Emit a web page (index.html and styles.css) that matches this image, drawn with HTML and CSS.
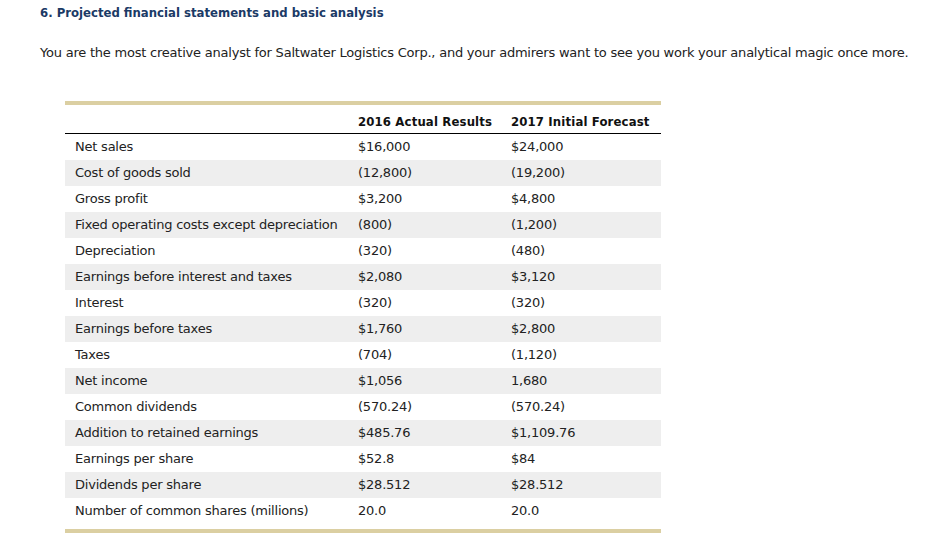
FILE: index.html
```html
<!DOCTYPE html>
<html>
<head>
<meta charset="utf-8">
<link rel="stylesheet" href="styles.css">
</head>
<body>
<div class="page">
  <h1 class="title">6. Projected financial statements and basic analysis</h1>
  <p class="intro">You are the most creative analyst for Saltwater Logistics Corp., and your admirers want to see you work your analytical magic once more.</p>
  <div class="table-wrap">
    <table class="fin">
      <thead>
        <tr>
          <th class="c1"></th>
          <th class="c2">2016 Actual Results</th>
          <th class="c3">2017 Initial Forecast</th>
        </tr>
      </thead>
      <tbody>
        <tr><td>Net sales</td><td>$16,000</td><td>$24,000</td></tr>
        <tr class="alt"><td>Cost of goods sold</td><td>(12,800)</td><td>(19,200)</td></tr>
        <tr><td>Gross profit</td><td>$3,200</td><td>$4,800</td></tr>
        <tr class="alt"><td>Fixed operating costs except depreciation</td><td>(800)</td><td>(1,200)</td></tr>
        <tr><td>Depreciation</td><td>(320)</td><td>(480)</td></tr>
        <tr class="alt"><td>Earnings before interest and taxes</td><td>$2,080</td><td>$3,120</td></tr>
        <tr><td>Interest</td><td>(320)</td><td>(320)</td></tr>
        <tr class="alt"><td>Earnings before taxes</td><td>$1,760</td><td>$2,800</td></tr>
        <tr><td>Taxes</td><td>(704)</td><td>(1,120)</td></tr>
        <tr class="alt"><td>Net income</td><td>$1,056</td><td>1,680</td></tr>
        <tr><td>Common dividends</td><td>(570.24)</td><td>(570.24)</td></tr>
        <tr class="alt"><td>Addition to retained earnings</td><td>$485.76</td><td>$1,109.76</td></tr>
        <tr><td>Earnings per share</td><td>$52.8</td><td>$84</td></tr>
        <tr class="alt"><td>Dividends per share</td><td>$28.512</td><td>$28.512</td></tr>
        <tr><td>Number of common shares (millions)</td><td>20.0</td><td>20.0</td></tr>
      </tbody>
    </table>
  </div>
</div>
</body>
</html>
```

FILE: styles.css
```css
html, body {
  margin: 0;
  padding: 0;
  background: #ffffff;
}
body {
  font-family: Verdana, "DejaVu Sans", sans-serif;
  font-size: 13px;
  letter-spacing: -0.22px;
  color: #222222;
}
.page {
  padding: 5px 40px 0 40px;
}
.title {
  margin: 0;
  font-family: "DejaVu Sans Condensed", "DejaVu Sans", sans-serif;
  font-stretch: condensed;
  letter-spacing: 0;
  font-size: 13px;
  font-weight: bold;
  line-height: 16px;
  color: #1b3a66;
}
.intro {
  margin: 24px 0 0 0;
  line-height: 16px;
  white-space: nowrap;
}
.table-wrap {
  margin: 40px 0 0 25px;
  width: 596px;
  border-top: 4px solid #dbcfa2;
  border-bottom: 4px solid #dbcfa2;
  padding-bottom: 5px;
}
.fin {
  width: 596px;
  border-collapse: collapse;
  table-layout: fixed;
}
.fin th {
  font-family: "DejaVu Sans Condensed", "DejaVu Sans", sans-serif;
  font-stretch: condensed;
  letter-spacing: 0.15px;
  font-weight: bold;
  text-align: left;
  height: 28px;
  vertical-align: bottom;
  padding: 0 10px 3px 10px;
  box-sizing: border-box;
  border-bottom: 1px solid #000000;
  color: #111111;
  line-height: 16px;
  white-space: nowrap;
}
.fin .c1 { width: 283px; }
.fin .c2 { width: 153px; }
.fin .c3 { width: 160px; }
.fin td {
  height: 26px;
  padding: 0 10px;
  line-height: 16px;
  vertical-align: middle;
  white-space: nowrap;
  box-sizing: border-box;
}
.fin tbody tr:first-child td {
  height: 27px;
  padding-top: 1px;
}
.fin tr.alt td {
  background: #eeeeee;
}
```
